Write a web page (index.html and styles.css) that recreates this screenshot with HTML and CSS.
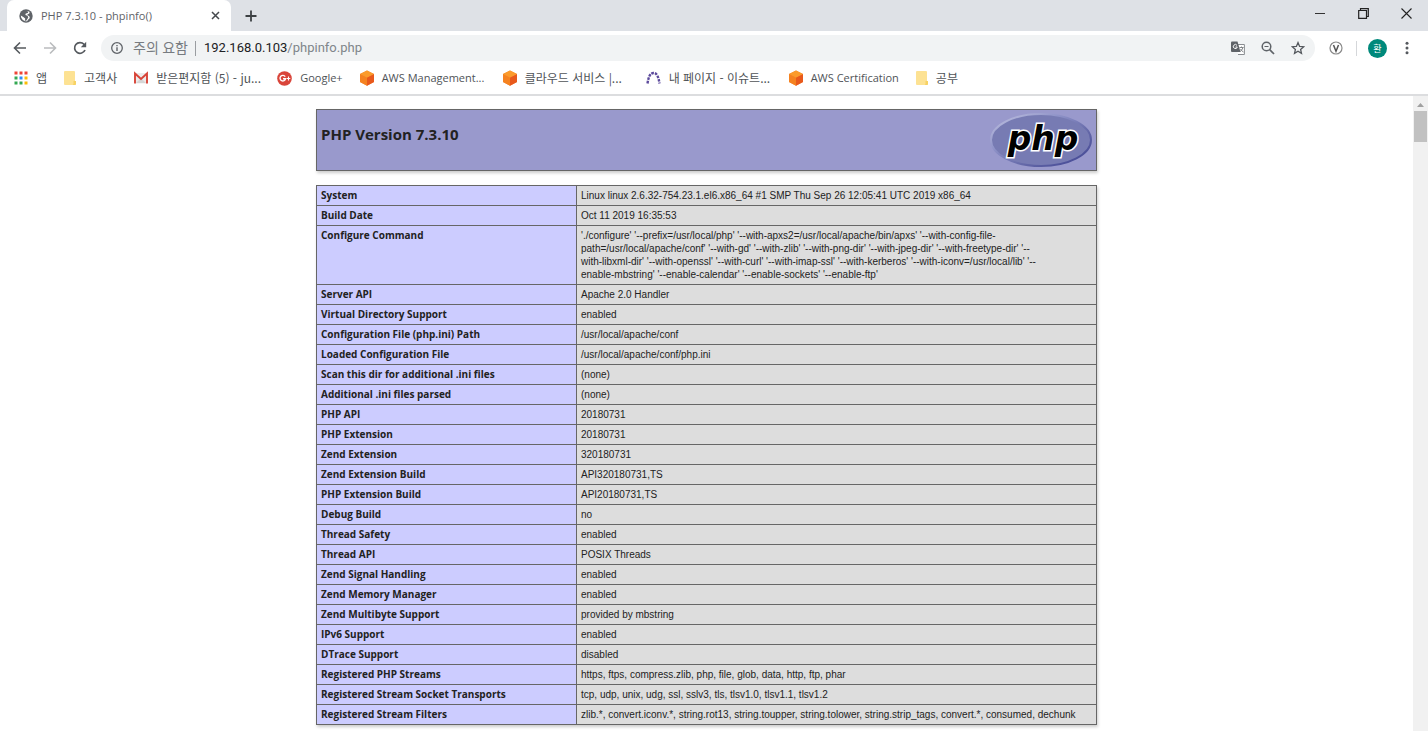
FILE: index.html
```html
<!DOCTYPE html>
<html lang="ko">
<head>
<meta charset="utf-8">
<title>PHP 7.3.10 - phpinfo()</title>
<link rel="stylesheet" href="styles.css">
</head>
<body>
<svg class="defs" width="0" height="0" aria-hidden="true">
  <defs>
    <symbol id="cube" viewBox="0 0 14 16">
      <path d="M7 0.5 14 4v8l-7 3.700L0 12V4z" fill="#f58536"/>
      <path d="M0 4 7 7.500v8.200L0 12z" fill="#f58220"/>
      <path d="M14 4 7 7.500v8.200L14 12z" fill="#e8591c"/>
      <path d="M7 .5 14 4 7 7.500 0 4z" fill="#fb9b2b"/>
    </symbol>
    <symbol id="folder" viewBox="0 0 12 14">
      <path d="M1 0h9q1 0 1 1v9h1v3q0 1-1 1H1q-1 0-1-1V1q0-1 1-1z" fill="#fde293"/>
      <path d="M9.500 10H12v3q0 1-1 1H8.500q1-.5 1-1.500z" fill="#f7d263"/>
    </symbol>
  </defs>
</svg>

<header class="browser">
  <div class="tabstrip">
    <div class="tab">
      <svg class="tab-icon" viewBox="0 0 14 14"><circle cx="7" cy="7" r="6.700" fill="#5f6368"/><path d="M7.500 2 9.300 2.600 8.800 4 6.800 4.500 6.300 6 8.500 6.800 9.300 8.300 8.400 10 7 12 6 11.500 6.200 9.500 4.300 8 1.800 6.500 2.200 8.800 3.800 11 6.500 12.300 8 12.200 9.300 10.500 10.800 9 10.300 7.300 8.600 6.200 8.300 5.500 10.300 4.600 10.600 3 9 2z" fill="#fff"/></svg>
      <span class="tab-title">PHP 7.3.10 - phpinfo()</span>
      <button class="plain" aria-label="Close tab"><svg width="9" height="9" viewBox="0 0 9 9"><path d="M1 1l7 7M8 1 1 8" stroke="#45494d" stroke-width="1.500"/></svg></button>
    </div>
    <button class="plain new-tab" aria-label="New tab"><svg width="12" height="12" viewBox="0 0 12 12"><path d="M6 .5v11M.5 6h11" stroke="#3c4043" stroke-width="1.800"/></svg></button>
    <div class="window-controls">
      <button class="plain" aria-label="Minimize"><svg width="11" height="11" viewBox="0 0 11 11"><path d="M0 5.500h10" stroke="#333" stroke-width="1"/></svg></button>
      <button class="plain" aria-label="Restore"><svg width="11" height="11" viewBox="0 0 11 11"><path d="M.7 2.500h7.800v7.800H.7zM2.500 2.500V.7h7.800v7.800H8.500" fill="none" stroke="#222" stroke-width="1.200"/></svg></button>
      <button class="plain" aria-label="Close"><svg width="11" height="11" viewBox="0 0 11 11"><path d="M.5.5l10 10M10.500.5l-10 10" stroke="#222" stroke-width="1.100"/></svg></button>
    </div>
  </div>

  <div class="toolbar">
    <div class="nav">
      <button class="plain" aria-label="Back"><svg width="14" height="14" viewBox="0 0 14 14"><path d="M13 7H2M7 1.500 1.500 7 7 12.500" fill="none" stroke="#55595e" stroke-width="1.600"/></svg></button>
      <button class="plain" aria-label="Forward"><svg width="14" height="14" viewBox="0 0 14 14"><path d="M1 7h11M7 1.500 12.500 7 7 12.500" fill="none" stroke="#babcbe" stroke-width="1.600"/></svg></button>
      <button class="plain" aria-label="Reload"><svg width="14" height="14" viewBox="0 0 14 14"><path d="M12 9A5.400 5.400 0 1 1 11 3.300L12 4.300" fill="none" stroke="#55595e" stroke-width="1.700"/><path d="M13.200.8v5.400H7.800z" fill="#55595e"/></svg></button>
    </div>
    <div class="omnibox">
      <svg width="12" height="12" viewBox="0 0 12 12"><circle cx="6" cy="6" r="5.300" fill="none" stroke="#5f6368" stroke-width="1.300"/><path d="M6 5.300V9M6 3v1.300" stroke="#5f6368" stroke-width="1.400"/></svg>
      <span class="warning">주의 요함</span>
      <span class="divider"></span>
      <span class="url"><b>192.168.0.103</b>/phpinfo.php</span>
      <div class="omnibox-actions">
        <button class="plain" aria-label="Translate"><svg width="14" height="14" viewBox="0 0 14 14"><path d="M5 3.500h8.400v10H7" fill="#fff" stroke="#8a8d91" stroke-width="1"/><path d="M0 1.500Q0 .5 1 .5h5.500L9.500 11H1q-1 0-1-1z" fill="#5f6368"/><path d="M6 4.400A2 2 0 1 0 6.300 6H4.500" fill="none" stroke="#fff" stroke-width="1"/><path d="M8.500 6.500h4M10.500 5.500v1M12 6.500Q11 9.500 9 10.500M9.500 8q1 2 3 3" fill="none" stroke="#777a7e" stroke-width=".9"/></svg></button>
        <button class="plain" aria-label="Zoom"><svg width="14" height="14" viewBox="0 0 14 14"><circle cx="5.500" cy="5.500" r="4.300" fill="none" stroke="#5f6368" stroke-width="1.500"/><path d="M8.700 8.700l4.300 4.300" stroke="#5f6368" stroke-width="1.700"/><path d="M3.500 5.500h4" stroke="#5f6368" stroke-width="1"/></svg></button>
        <button class="plain" aria-label="Bookmark"><svg width="14" height="14" viewBox="0 0 14 14"><path d="M7 1.600 8.600 5.400 12.700 5.700 9.600 8.400 10.500 12.400 7 10.300 3.500 12.400 4.400 8.400 1.300 5.700 5.400 5.400z" fill="none" stroke="#55595e" stroke-width="1.300"/></svg></button>
      </div>
    </div>
    <div class="extras">
      <button class="plain" aria-label="Extension"><svg width="14" height="14" viewBox="0 0 14 14"><circle cx="7" cy="7" r="6" fill="#fff" stroke="#8a8a8a" stroke-width="1.200"/><path d="M4.500 4 7 10.200 9.500 4" fill="none" stroke="#555" stroke-width="1.500"/></svg></button>
      <span class="separator"></span>
      <button class="plain avatar" aria-label="Profile">환</button>
      <button class="plain" aria-label="Menu"><svg width="4" height="14" viewBox="0 0 4 14"><g fill="#55595e"><circle cx="2" cy="2.200" r="1.500"/><circle cx="2" cy="7" r="1.500"/><circle cx="2" cy="11.800" r="1.500"/></g></svg></button>
    </div>
  </div>

  <nav class="bookmarks">
    <a href="#"><svg width="14" height="14" viewBox="0 0 14 14"><path d="M.5.5h3v3h-3zM5.500.5h3v3h-3zM10.500.5h3v3h-3z" fill="#ee4436"/><path d="M.5 5.500h3v3h-3zM.5 10.500h3v3h-3zM5.500 10.500h3v3h-3z" fill="#34a853"/><path d="M5.500 5.500h3v3h-3z" fill="#2f8df5"/><path d="M10.500 5.500h3v3h-3zM10.500 10.500h3v3h-3z" fill="#fbbc05"/></svg><span class="hangul">앱</span></a>
    <a href="#"><svg width="12" height="14"><use href="#folder"/></svg><span class="hangul">고객사</span></a>
    <a href="#" class="clipped"><svg width="14" height="14" viewBox="0 0 14 14"><path d="M1.500 2h11v10.500h-11z" fill="#ececec"/><path d="M2 12 7 7l5 5z" fill="#d6d6d6"/><path d="M1 12.500V2.500L7 8l6-5.500v10" fill="none" stroke="#d84438" stroke-width="1.900"/></svg><span class="hangul">받은편지함 (5) - ju...</span></a>
    <a href="#"><svg width="15" height="15" viewBox="0 0 15 15"><circle cx="7.500" cy="7.500" r="7.300" fill="#d9453a"/><path d="M8.200 5.600A2.800 2.800 0 1 0 8.600 7.700H6" fill="none" stroke="#fff" stroke-width="1.400"/><path d="M11.500 5.500v4M9.700 7.500h3.600" stroke="#fff" stroke-width="1.100"/></svg><span>Google+</span></a>
    <a href="#" class="clipped"><svg width="14" height="16"><use href="#cube"/></svg><span>AWS Management...</span></a>
    <a href="#" class="clipped"><svg width="14" height="16"><use href="#cube"/></svg><span class="hangul">클라우드 서비스 |...</span></a>
    <a href="#" class="clipped"><svg width="15" height="14" viewBox="0 0 15 14"><path d="M1.500 12.500C2.500 6 4 2 7.500 2s5 4 6 10.500" fill="none" stroke="#5c4a9c" stroke-width="2.400" stroke-dasharray="2.600 1"/></svg><span class="hangul">내 페이지 - 이슈트...</span></a>
    <a href="#"><svg width="14" height="16"><use href="#cube"/></svg><span>AWS Certification</span></a>
    <a href="#"><svg width="12" height="14"><use href="#folder"/></svg><span class="hangul">공부</span></a>
  </nav>
</header>

<div class="viewport">
  <main class="page">
    <section class="banner">
      <h1>PHP Version 7.3.10</h1>
      <svg class="logo" width="104" height="56" viewBox="0 0 104 56" role="img" aria-label="PHP logo">
        <defs>
          <linearGradient id="rim" x1="0" y1="0" x2="1" y2="1">
            <stop offset="0" stop-color="#c3c5e2"/><stop offset=".35" stop-color="#8f93c8"/><stop offset=".65" stop-color="#6468a8"/><stop offset="1" stop-color="#3c4090"/>
          </linearGradient>
        </defs>
        <ellipse cx="52" cy="28" rx="50" ry="26" fill="#777bb3" stroke="url(#rim)" stroke-width="2"/>
        <text x="54" y="38" text-anchor="middle" class="logo-text">php</text>
      </svg>
    </section>
    <table class="info">
      <tbody>
        <tr><th scope="row">System</th><td>Linux linux 2.6.32-754.23.1.el6.x86_64 #1 SMP Thu Sep 26 12:05:41 UTC 2019 x86_64</td></tr>
        <tr><th scope="row">Build Date</th><td>Oct 11 2019 16:35:53</td></tr>
        <tr><th scope="row">Configure Command</th><td>'./configure' '--prefix=/usr/local/php' '--with-apxs2=/usr/local/apache/bin/apxs' '--with-config-file-<br>path=/usr/local/apache/conf' '--with-gd' '--with-zlib' '--with-png-dir' '--with-jpeg-dir' '--with-freetype-dir' '--<br>with-libxml-dir' '--with-openssl' '--with-curl' '--with-imap-ssl' '--with-kerberos' '--with-iconv=/usr/local/lib' '--<br>enable-mbstring' '--enable-calendar' '--enable-sockets' '--enable-ftp'</td></tr>
        <tr><th scope="row">Server API</th><td>Apache 2.0 Handler</td></tr>
        <tr><th scope="row">Virtual Directory Support</th><td>enabled</td></tr>
        <tr><th scope="row">Configuration File (php.ini) Path</th><td>/usr/local/apache/conf</td></tr>
        <tr><th scope="row">Loaded Configuration File</th><td>/usr/local/apache/conf/php.ini</td></tr>
        <tr><th scope="row">Scan this dir for additional .ini files</th><td>(none)</td></tr>
        <tr><th scope="row">Additional .ini files parsed</th><td>(none)</td></tr>
        <tr><th scope="row">PHP API</th><td>20180731</td></tr>
        <tr><th scope="row">PHP Extension</th><td>20180731</td></tr>
        <tr><th scope="row">Zend Extension</th><td>320180731</td></tr>
        <tr><th scope="row">Zend Extension Build</th><td>API320180731,TS</td></tr>
        <tr><th scope="row">PHP Extension Build</th><td>API20180731,TS</td></tr>
        <tr><th scope="row">Debug Build</th><td>no</td></tr>
        <tr><th scope="row">Thread Safety</th><td>enabled</td></tr>
        <tr><th scope="row">Thread API</th><td>POSIX Threads</td></tr>
        <tr><th scope="row">Zend Signal Handling</th><td>enabled</td></tr>
        <tr><th scope="row">Zend Memory Manager</th><td>enabled</td></tr>
        <tr><th scope="row">Zend Multibyte Support</th><td>provided by mbstring</td></tr>
        <tr><th scope="row">IPv6 Support</th><td>enabled</td></tr>
        <tr><th scope="row">DTrace Support</th><td>disabled</td></tr>
        <tr><th scope="row">Registered PHP Streams</th><td>https, ftps, compress.zlib, php, file, glob, data, http, ftp, phar</td></tr>
        <tr><th scope="row">Registered Stream Socket Transports</th><td>tcp, udp, unix, udg, ssl, sslv3, tls, tlsv1.0, tlsv1.1, tlsv1.2</td></tr>
        <tr><th scope="row">Registered Stream Filters</th><td>zlib.*, convert.iconv.*, string.rot13, string.toupper, string.tolower, string.strip_tags, convert.*, consumed, dechunk</td></tr>
      </tbody>
    </table>
  </main>
  <div class="scrollbar" aria-hidden="true">
    <svg width="7" height="4" viewBox="0 0 7 4"><path d="M0 4 3.500 0 7 4z" fill="#a0a0a0"/></svg>
    <div class="thumb"></div>
  </div>
</div>
</body>
</html>
```
FILE: styles.css
```css
* { box-sizing: border-box; }

body {
  margin: 0;
  height: 100vh;
  display: flex;
  flex-direction: column;
  overflow: hidden;
  background: #fff;
  color: #222;
  font-family: "Open Sans", "Noto Sans CJK KR", sans-serif;
  font-size: 11px;
}

svg { display: block; flex: none; }
.defs { position: absolute; }

.plain {
  display: flex;
  align-items: center;
  justify-content: center;
  padding: 0;
  border: 0;
  background: none;
  font: inherit;
}

/* Browser frame */
.browser {
  flex: none;
  border-bottom: 2px solid #dcdddf;
  color: #5f6368;
}

.tabstrip {
  display: flex;
  align-items: stretch;
  height: 31px;
  padding-left: 7px;
  background: #dee1e6;
}

.tab {
  display: flex;
  align-items: center;
  gap: 8px;
  width: 224px;
  padding: 0 11px 0 12px;
  border-radius: 7px 7px 0 0;
  background: #fff;
}

.tab-icon { width: 14px; height: 14px; }
.tab-title { flex: 1; white-space: nowrap; }
.new-tab { width: 40px; }

.window-controls {
  display: flex;
  gap: 32px;
  margin-left: auto;
  padding: 0 16px 4px 0;
}

.toolbar {
  display: flex;
  align-items: center;
  height: 34px;
  padding: 0 19px 0 13px;
}

.nav { display: flex; gap: 16px; width: 88px; }

.omnibox {
  flex: 1;
  display: flex;
  align-items: center;
  height: 26px;
  padding: 0 10px;
  border-radius: 13px;
  background: #f1f3f4;
  font-family: Roboto, "Noto Sans CJK KR", sans-serif;
  font-size: 13px;
  line-height: 20px;
}

.warning { margin-left: 10px; font-size: 14px; color: #777b80; }
.divider { width: 1px; height: 15px; margin: 0 8px 0 7px; background: #9a9da1; }
.url { color: #80868b; }
.url b { font-weight: 400; color: #202124; }

.omnibox-actions { display: flex; gap: 16px; margin-left: auto; }

.extras { display: flex; align-items: center; padding-left: 14px; }
.separator { width: 1px; height: 15px; margin: 0 11px 0 13px; background: #d5d7da; }

.avatar {
  width: 19px;
  height: 19px;
  margin-right: 18px;
  border-radius: 50%;
  background: #00897b;
  color: #fff;
  font-size: 9px;
}

.bookmarks {
  display: flex;
  align-items: center;
  gap: 17px;
  height: 29px;
  padding: 0 14px 3px;
}

.bookmarks a {
  display: flex;
  align-items: center;
  gap: 8px;
  color: #4f5357;
  text-decoration: none;
  white-space: nowrap;
  line-height: 16px;
}

.bookmarks .clipped { width: 126px; }
.hangul { font-family: "Noto Sans CJK KR", sans-serif; font-size: 12px; }

/* Page content */
.viewport { flex: 1; min-height: 0; display: flex; }

.page {
  flex: 1;
  display: flex;
  flex-direction: column;
  align-items: center;
  gap: 14px;
  padding: 13px 16px;
}

.banner,
.info {
  width: 100%;
  max-width: 781px;
  box-shadow: 1px 2px 3px #ccc;
}

.banner {
  display: flex;
  justify-content: space-between;
  align-items: flex-start;
  padding: 2px 3px 2px 4px;
  border: 1px solid #666;
  background: #9999cc;
}

.banner h1 { margin: 0; padding-top: 12px; font-size: 15px; line-height: 20px; }

.logo-text {
  font-family: "DejaVu Sans", sans-serif;
  font-size: 33px;
  font-weight: 700;
  font-style: italic;
  fill: #000;
  stroke: #fff;
  stroke-width: 3px;
  paint-order: stroke;
}

.info { border-collapse: collapse; table-layout: fixed; }

.info th,
.info td {
  padding: 3px 4px;
  border: 1px solid #666;
  line-height: 13px;
  text-align: left;
  vertical-align: top;
}

.info th { width: 260px; background: #ccccff; font-size: 10px; }
.info td { background: #dddddd; font-family: "Liberation Sans", sans-serif; font-size: 10px; }

.scrollbar {
  flex: none;
  display: flex;
  flex-direction: column;
  align-items: center;
  gap: 4px;
  width: 15px;
  padding-top: 7px;
  background: #f1f1f1;
}

.thumb { width: 13px; height: 31px; background: #c1c1c1; }
```
